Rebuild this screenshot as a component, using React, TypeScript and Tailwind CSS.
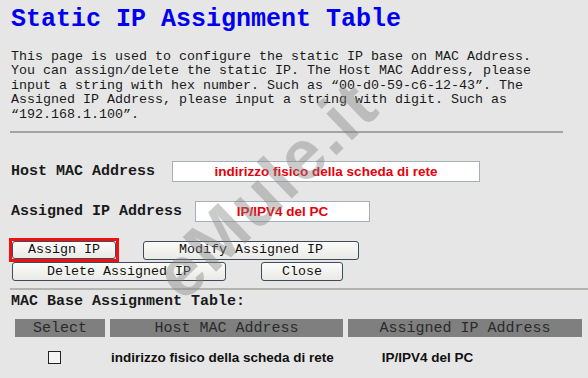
import React from "react"

const mono = "font-['Liberation_Mono',monospace]"
const sans = "font-['Liberation_Sans',Arial,sans-serif]"

function Btn({ label, className }: { label: string; className: string }) {
  return (
    <button
      className={`${mono} flex items-center justify-center rounded-[3px] border border-[#3e4b5b] bg-[linear-gradient(#fbfbf9,#e9e9e6)] text-[13.33px] leading-none text-[#111] ${className}`}
    >
      {label}
    </button>
  )
}

export default function App() {
  return (
    <div className="relative h-[378px] w-[588px] overflow-hidden bg-[#e6e6e6] text-[#1a1a1a]">
      <h1 className={`${mono} pl-[11px] pt-[6px] text-[25px] font-bold leading-[28px] text-[#0000f0]`}>
        Static IP Assignment Table
      </h1>

      <p className={`${mono} mt-[16px] whitespace-pre pl-[11px] text-[13.33px] leading-[14.4px]`}>
        {"This page is used to configure the static IP base on MAC Address.\nYou can assign/delete the static IP. The Host MAC Address, please\ninput a string with hex number. Such as \u201c00-d0-59-c6-12-43\u201d. The\nAssigned IP Address, please input a string with digit. Such as\n\u201c192.168.1.100\u201d."}
      </p>

      <div className="ml-[10px] mt-[9px] h-[2px] w-[553px] bg-[#a4a59d]" />

      <div className="mt-[28px] flex h-[21px] items-center pl-[11px]">
        <span className={`${mono} w-[161px] text-[15px] font-bold leading-none`}>Host MAC Address</span>
        <div
          className={`${sans} flex h-[21px] w-[308px] items-center justify-center border border-[#a6b0ba] bg-white text-[13.5px] font-bold leading-none text-[#e8000a]`}
        >
          indirizzo fisico della scheda di rete
        </div>
      </div>

      <div className="mt-[19px] flex h-[21px] items-center pl-[11px]">
        <span className={`${mono} w-[184px] text-[15px] font-bold leading-none`}>Assigned IP Address</span>
        <div
          className={`${sans} flex h-[21px] w-[175px] items-center justify-center border border-[#a6b0ba] bg-white text-[13.5px] font-bold leading-none text-[#e8000a]`}
        >
          IP/IPV4 del PC
        </div>
      </div>

      <div className="mt-[16px] flex h-[24px] items-center pl-[9px]">
        <div className="border-[3px] border-[#ee1111]">
          <Btn label="Assign IP" className="h-[18px] w-[104px]" />
        </div>
        <Btn label="Modify Assigned IP" className="ml-[24px] h-[19px] w-[216px]" />
      </div>
      <div className="flex h-[19px] items-center pl-[12px]">
        <Btn label="Delete Assigned IP" className="h-[19px] w-[214px]" />
        <Btn label="Close" className="ml-[35px] h-[19px] w-[82px]" />
      </div>

      <div className="ml-[10px] mt-[7px] h-[2px] w-[578px] bg-[#b4b4ae]" />

      <div className={`${mono} mt-[3px] pl-[11px] text-[15px] font-bold leading-[18px]`}>
        MAC Base Assignment Table:
      </div>

      <div className={`${mono} mt-[8px] flex gap-[5px] pl-[15px] text-[15px] leading-none text-[#2a2a2a]`}>
        <div className="flex h-[18px] w-[90px] items-center justify-center bg-[#7f7f7f]">Select</div>
        <div className="flex h-[18px] w-[233px] items-center justify-center bg-[#7f7f7f]">Host MAC Address</div>
        <div className="flex h-[18px] w-[234px] items-center justify-center bg-[#7f7f7f]">Assigned IP Address</div>
      </div>

      <div className={`${sans} mt-[14px] flex h-[13px] items-center text-[13.5px] font-bold leading-none text-[#111]`}>
        <div className="ml-[48px] h-[13px] w-[13px] border border-[#222] bg-[#f4f4f4]" />
        <span className="ml-[50px]">indirizzo fisico della scheda di rete</span>
        <span className="ml-[48px]">IP/IPV4 del PC</span>
      </div>

      <div
        className={`${sans} pointer-events-none absolute left-[266px] top-[190px] -translate-x-1/2 -translate-y-1/2 -rotate-[44deg] select-none whitespace-nowrap text-[70px] font-bold leading-none tracking-[2px] text-[rgba(130,130,130,0.42)]`}
      >
        eMule.it
      </div>
    </div>
  )
}
